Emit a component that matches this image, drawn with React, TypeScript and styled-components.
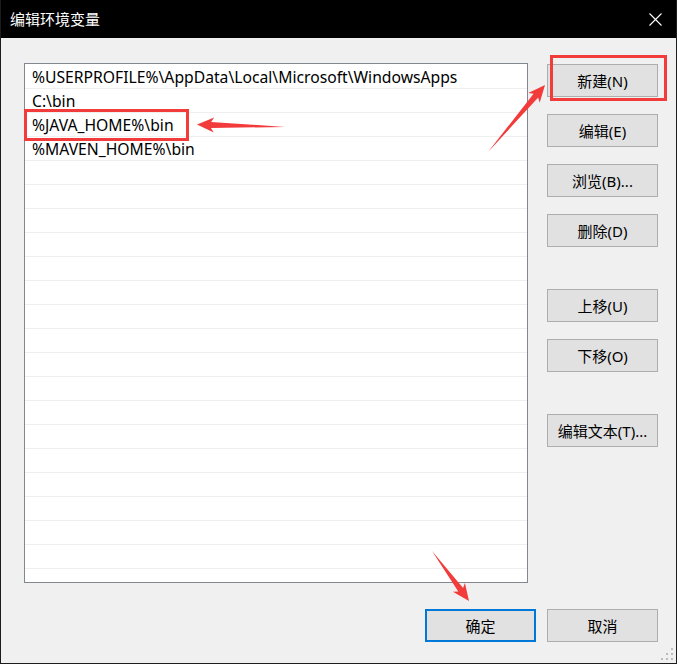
import React from 'react';
import styled, { createGlobalStyle } from 'styled-components';

const Global = createGlobalStyle`
  html, body { margin: 0; padding: 0; background: #ffffff; }
  body { font-family: "Noto Sans", "Noto Sans CJK SC", sans-serif; }
`;

const UI_FONT = `"Noto Sans", "Noto Sans CJK SC", sans-serif`;
const RED = '#f23b3b';

const Window = styled.div`
  position: relative;
  width: 677px;
  height: 664px;
  box-sizing: border-box;
  border: 1px solid #1c1c1c;
  border-top: none;
  background: #f0f0f0;
  display: flex;
  flex-direction: column;
  overflow: hidden;
`;

const TitleBar = styled.div`
  height: 38px;
  flex: none;
  background: #000000;
  color: #ffffff;
  display: flex;
  align-items: center;
  justify-content: space-between;
  padding: 0 14px 0 9px;
  font: 15px ${UI_FONT};
`;

const Title = styled.span`
  line-height: 38px;
  letter-spacing: 0;
`;

const CloseIcon = styled.svg`
  width: 13px;
  height: 13px;
  display: block;
`;

const Body = styled.div`
  flex: 1;
  display: grid;
  grid-template-columns: 504px 111px;
  grid-template-rows: 520px 33px;
  column-gap: 19px;
  row-gap: 26px;
  padding: 25px 0 0 23px;
`;

const ListBox = styled.div`
  box-sizing: border-box;
  border: 1px solid #828790;
  background: #ffffff;
  padding-top: 1px;
  overflow: hidden;
`;

const Row = styled.div`
  box-sizing: border-box;
  height: 24px;
  border-bottom: 1px solid #efefef;
  padding: 1px 0 0 7px;
  font: 15.7px ${UI_FONT};
  line-height: 22px;
  color: #000000;
  white-space: nowrap;
`;

const ButtonColumn = styled.div`
  display: flex;
  flex-direction: column;
  padding-top: 1px;
`;

const Button = styled.div<{ $gap?: number; $default?: boolean }>`
  box-sizing: border-box;
  width: 111px;
  height: 33px;
  margin-top: ${(p) => p.$gap ?? 0}px;
  background: #e1e1e1;
  border: ${(p) => (p.$default ? '2px solid #0078d7' : '1px solid #adadad')};
  display: flex;
  align-items: center;
  justify-content: center;
  font: 15px ${UI_FONT};
  color: #000000;
  flex: none;
`;

const Footer = styled.div`
  grid-column: 1 / span 2;
  display: flex;
  justify-content: flex-end;
  gap: 11px;
`;

const HighlightBox = styled.div<{ $x: number; $y: number; $w: number; $h: number }>`
  position: absolute;
  left: ${(p) => p.$x - 1}px;
  top: ${(p) => p.$y}px;
  width: ${(p) => p.$w}px;
  height: ${(p) => p.$h}px;
  box-sizing: border-box;
  border: 3px solid ${RED};
  pointer-events: none;
`;

const ArrowLayer = styled.svg`
  position: absolute;
  left: -1px;
  top: 0;
  width: 677px;
  height: 664px;
  pointer-events: none;
`;

const Grip = styled.svg`
  position: absolute;
  right: 0;
  bottom: 0;
  width: 16px;
  height: 16px;
`;

function arrow(tx: number, ty: number, hx: number, hy: number, Lh = 17, wh = 15, ws = 6, notch = 3) {
  const dx = hx - tx;
  const dy = hy - ty;
  const len = Math.hypot(dx, dy);
  const ux = dx / len;
  const uy = dy / len;
  const vx = -uy;
  const vy = ux;
  const P = (u: number, v: number) =>
    `${(tx + ux * u + vx * v).toFixed(1)},${(ty + uy * u + vy * v).toFixed(1)}`;
  return [
    P(0, 0),
    P(len - Lh + notch, ws / 2),
    P(len - Lh, wh / 2),
    P(len, 0),
    P(len - Lh, -wh / 2),
    P(len - Lh + notch, -ws / 2),
  ].join(' ');
}

const entries = [
  '%USERPROFILE%\\AppData\\Local\\Microsoft\\WindowsApps',
  'C:\\bin',
  '%JAVA_HOME%\\bin',
  '%MAVEN_HOME%\\bin',
];

const rows = Array.from({ length: 22 }, (_, i) => entries[i] ?? '');

const sideButtons: { label: string; gap: number }[] = [
  { label: '新建(N)', gap: 0 },
  { label: '编辑(E)', gap: 17 },
  { label: '浏览(B)...', gap: 17 },
  { label: '删除(D)', gap: 17 },
  { label: '上移(U)', gap: 42 },
  { label: '下移(O)', gap: 17 },
  { label: '编辑文本(T)...', gap: 42 },
];

export default function App() {
  return (
    <>
      <Global />
      <Window>
        <TitleBar>
          <Title>编辑环境变量</Title>
          <CloseIcon viewBox="0 0 13 13">
            <path d="M0.5 0.5 L12.5 12.5 M12.5 0.5 L0.5 12.5" stroke="#ffffff" strokeWidth="1.1" fill="none" />
          </CloseIcon>
        </TitleBar>
        <Body>
          <ListBox>
            {rows.map((r, i) => (
              <Row key={i}>{r}</Row>
            ))}
          </ListBox>
          <ButtonColumn>
            {sideButtons.map((b) => (
              <Button key={b.label} $gap={b.gap}>
                {b.label}
              </Button>
            ))}
          </ButtonColumn>
          <Footer>
            <Button $default>确定</Button>
            <Button>取消</Button>
          </Footer>
        </Body>

        <HighlightBox $x={24} $y={109} $w={165} $h={32} />
        <HighlightBox $x={550} $y={55} $w={117} $h={46} />
        <ArrowLayer viewBox="0 0 677 664">
          <polygon points={arrow(285, 127, 197, 124.5)} fill={RED} />
          <polygon points={arrow(488, 152, 545, 85)} fill={RED} />
          <polygon points={arrow(432, 551, 469, 601)} fill={RED} />
        </ArrowLayer>
        <Grip viewBox="0 0 16 16">
          {[
            [11, 1],
            [6, 6],
            [11, 6],
            [1, 11],
            [6, 11],
            [11, 11],
          ].map(([x, y], i) => (
            <rect key={i} x={x} y={y} width={2} height={2} fill="#bdbdbd" />
          ))}
        </Grip>
      </Window>
    </>
  );
}
